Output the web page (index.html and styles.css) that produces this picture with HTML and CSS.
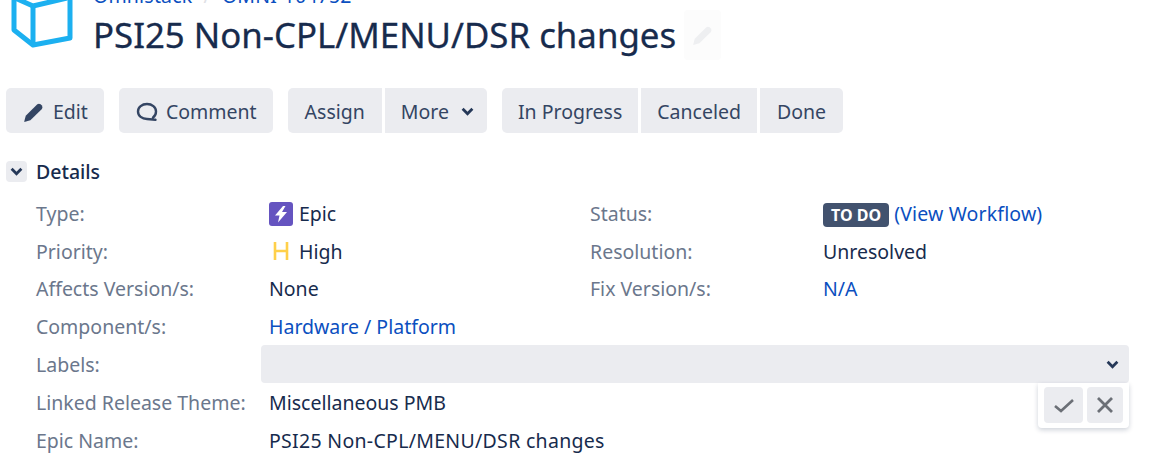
FILE: index.html
```html
<!DOCTYPE html>
<html lang="en">
<head>
    <meta charset="UTF-8">
    <title>PSI25 Non-CPL/MENU/DSR changes</title>
    <link rel="stylesheet" href="styles.css">
</head>
<body>

    <div class="page">
        <!-- Issue header, top is cut by the window -->
        <header class="issue-header">
            <svg class="project-icon" width="72" height="52" viewBox="0 0 72 52" fill="none" stroke="#1cb0f0" stroke-width="5" stroke-linejoin="round">
                <path d="M7 -6 L7 30 L26 45 L63 38 L63 -6"/>
                <path d="M26 45 L26 6"/>
                <path d="M8 -2 L26 6 L60 -2"/>
            </svg>
            <div class="issue-titles">
                <div class="breadcrumbs"><a href="#">Omnistack</a><span class="crumb-sep">/</span><a href="#">OMNI-104752</a></div>
                <h1 class="issue-title">PSI25 Non-CPL/MENU/DSR changes <span class="title-edit">
                    <svg width="22" height="22" viewBox="0 0 20 20"><path fill="#eeeff1" d="M1 19 L2.500 13.500 L13 3 Q14.500 2 16 3 L17.200 4.200 Q18.200 5.700 17.200 7.200 L6.700 17.500 Z"/></svg>
                </span></h1>
            </div>
        </header>

        <!-- Toolbar -->
        <div class="toolbar">
            <div class="btn-group">
                <button class="btn btn-icon">
                    <svg width="22" height="22" viewBox="0 0 20 20"><path fill="#344563" d="M1 19 L2.500 13.500 L13 3 Q14.500 2 16 3 L17.200 4.200 Q18.200 5.700 17.200 7.200 L6.700 17.500 Z"/></svg>
                    Edit
                </button>
            </div>
            <div class="btn-group">
                <button class="btn btn-icon">
                    <svg width="22" height="20" viewBox="0 0 22 20" fill="none"><path stroke="#344563" stroke-width="2.400" stroke-linecap="round" d="M17 15.500 Q20 13.500 20 9.500 C20 5 16 2 11 2 C6 2 2 5 2 9.500 C2 14 6 17 11 17 L19.500 17.800"/></svg>
                    Comment
                </button>
            </div>
            <div class="btn-group">
                <button class="btn btn-wide">Assign</button>
                <button class="btn btn-more">More
                    <svg class="chevron" width="13" height="9" viewBox="0 0 12 8" fill="none"><path stroke="#253858" stroke-width="2.600" d="M1.500 1.500 L6 6 L10.500 1.500"/></svg>
                </button>
            </div>
            <div class="btn-group">
                <button class="btn">In Progress</button>
                <button class="btn">Canceled</button>
                <button class="btn btn-wide">Done</button>
            </div>
        </div>

        <!-- Details module -->
        <section class="details">
            <div class="details-head">
                <span class="twixie">
                    <svg width="13" height="9" viewBox="0 0 12 8" fill="none"><path stroke="#253858" stroke-width="2.600" d="M1.500 1.500 L6 6 L10.500 1.500"/></svg>
                </span>
                <h2>Details</h2>
            </div>

            <div class="fields">
                <div class="row">
                    <span class="label">Type:</span>
                    <span class="value value-icon">
                        <svg width="24" height="24" viewBox="0 0 24 24"><rect width="24" height="24" rx="3" fill="#6554c0"/><path fill="#fff" d="M14 4 L6 13.500 L10.500 13.500 L9 20.500 L18 10 L13 10 L16.500 4 Z"/></svg>
                        Epic
                    </span>
                    <span class="label">Status:</span>
                    <span class="value"><span class="lozenge">TO DO</span> <a href="#">(View Workflow)</a></span>
                </div>
                <div class="row">
                    <span class="label">Priority:</span>
                    <span class="value value-icon">
                        <svg width="24" height="24" viewBox="0 0 24 24" fill="none"><path stroke="#ffd04a" stroke-width="2.600" d="M6 3 V21 M18 3 V21 M6 12 H18"/></svg>
                        High
                    </span>
                    <span class="label">Resolution:</span>
                    <span class="value">Unresolved</span>
                </div>
                <div class="row">
                    <span class="label">Affects Version/s:</span>
                    <span class="value">None</span>
                    <span class="label">Fix Version/s:</span>
                    <span class="value"><a href="#">N/A</a></span>
                </div>
                <div class="row">
                    <span class="label">Component/s:</span>
                    <span class="value"><a href="#">Hardware / Platform</a></span>
                </div>
                <div class="row row-edit">
                    <span class="label">Labels:</span>
                    <div class="inline-edit">
                        <svg width="13" height="9" viewBox="0 0 12 8" fill="none"><path stroke="#253858" stroke-width="2.600" d="M1.500 1.500 L6 6 L10.500 1.500"/></svg>
                        <div class="edit-actions">
                            <button class="action">
                                <svg width="22" height="20" viewBox="0 0 22 20" fill="none"><path stroke="#6b6f76" stroke-width="2.600" d="M2 11 L8 16 L20 5"/></svg>
                            </button>
                            <button class="action">
                                <svg width="20" height="20" viewBox="0 0 20 20" fill="none"><path stroke="#6b6f76" stroke-width="2.800" d="M3 3 L17 17 M17 3 L3 17"/></svg>
                            </button>
                        </div>
                    </div>
                </div>
                <div class="row">
                    <span class="label">Linked Release Theme:</span>
                    <span class="value">Miscellaneous PMB</span>
                </div>
                <div class="row">
                    <span class="label">Epic Name:</span>
                    <span class="value value-name">PSI25 Non-CPL/MENU/DSR changes</span>
                </div>
            </div>
        </section>
    </div>

</body>
</html>
```

FILE: styles.css
```css
html, body {
    height: 100%;
}
body {
    margin: 0;
    background: #fff;
    color: #172b4d;
    font-family: "Noto Sans", "Open Sans", sans-serif;
    font-size: 19.500px;
    overflow: hidden;
}
a {
    color: #0b4fc0;
    text-decoration: none;
}
.page {
    margin-top: -17px;
}

/* Header */
.issue-header {
    display: flex;
    height: 105px;
    padding-left: 7px;
}
.project-icon {
    flex: none;
    margin-top: 17px;
}
.issue-titles {
    margin-left: 14px;
}
.breadcrumbs {
    display: flex;
    gap: 11px;
    height: 26px;
    line-height: 26px;
    letter-spacing: 0.200px;
}
.crumb-sep {
    color: #dfe1e6;
}
.issue-title {
    margin: 0;
    display: flex;
    align-items: center;
    gap: 8px;
    font-size: 34.800px;
    font-weight: 400;
    line-height: 52px;
    -webkit-text-stroke: 0.300px #172b4d;
    white-space: nowrap;
}
.title-edit {
    width: 37px;
    height: 50px;
    display: flex;
    align-items: center;
    justify-content: center;
    background: #fcfcfc;
    border-radius: 4px;
}

/* Toolbar */
.toolbar {
    display: flex;
    gap: 15px;
    padding-left: 6px;
}
.btn-group {
    display: flex;
    gap: 3px;
}
.btn {
    height: 45px;
    padding: 2px 16px 0;
    display: flex;
    align-items: center;
    border: none;
    border-radius: 0;
    background: #ebecf0;
    color: #344563;
    font: inherit;
}
.btn-icon {
    gap: 8px;
    padding-left: 17px;
}
.btn-wide {
    padding: 2px 17px 0;
}
.btn-more {
    padding-right: 13px;
}
.btn-group .btn:first-child {
    border-radius: 5px 0 0 5px;
}
.btn-group .btn:last-child {
    border-radius: 0 5px 5px 0;
}
.btn-group .btn:only-child {
    border-radius: 5px;
}
.chevron {
    margin-left: 12px;
}

/* Details */
.details {
    padding: 23px 0 0 6px;
}
.details-head {
    display: flex;
    align-items: center;
    gap: 9px;
    height: 30px;
}
.twixie {
    width: 21px;
    height: 21px;
    display: flex;
    align-items: center;
    justify-content: center;
    background: #ebecf0;
    border-radius: 4px;
}
.details-head h2 {
    margin: 0;
    font-size: 19.500px;
    font-weight: 500;
}
.fields {
    margin-top: 9px;
}
.row {
    display: grid;
    grid-template-columns: 233px 321px 233px 1fr;
    height: 37.600px;
    padding-left: 30px;
    align-items: center;
    color: #172b4d;
}
.label {
    color: #6b778c;
}
.value {
    white-space: nowrap;
}
.value-icon {
    display: flex;
    align-items: center;
    gap: 6px;
}
.value-name {
    letter-spacing: 0.300px;
}
.lozenge {
    display: inline-block;
    padding: 0 8px;
    background: #42526e;
    border-radius: 4px;
    color: #fff;
    font-size: 16px;
    font-weight: 700;
    line-height: 24px;
}
.lozenge + a {
    letter-spacing: 0.150px;
}

/* Labels field in edit mode */
.row-edit {
    grid-template-columns: 225px 1fr;
    margin-bottom: 1px;
    padding-right: 33px;
}
.inline-edit {
    position: relative;
    height: 37.600px;
    display: flex;
    align-items: center;
    justify-content: flex-end;
    padding-right: 10px;
    background: #ebecf0;
    border-radius: 4px;
}
.edit-actions {
    position: absolute;
    top: 37.600px;
    right: 0;
    display: flex;
    gap: 4px;
    padding: 4px 6px 5px 6px;
    background: #fff;
    border-radius: 0 0 4px 4px;
    box-shadow: 0 2px 5px rgba(9, 30, 66, 0.200);
}
.action {
    width: 39px;
    height: 36px;
    display: flex;
    align-items: center;
    justify-content: center;
    padding: 0;
    border: none;
    border-radius: 4px;
    background: #ebecf0;
}
.edit-actions .action:last-child {
    width: 36px;
}
```
